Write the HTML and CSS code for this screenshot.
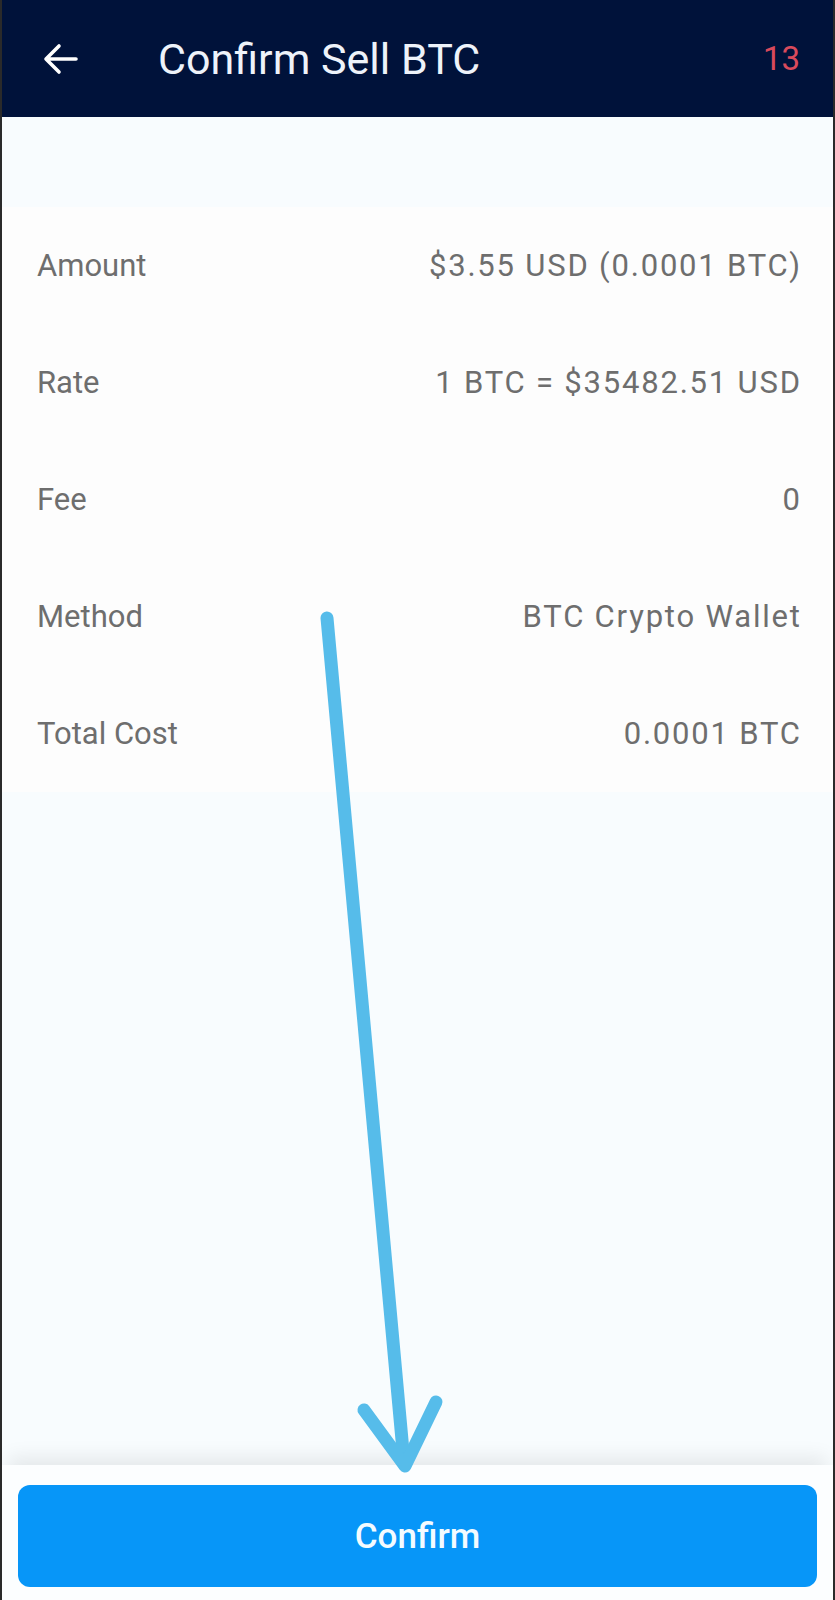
FILE: index.html
```html
<!DOCTYPE html>
<html lang="en">
<head>
  <meta charset="UTF-8">
  <meta name="viewport" content="width=device-width, initial-scale=1.0">
  <title>Confirm Sell BTC</title>
  <link rel="stylesheet" href="styles.css">
</head>
<body>
  <div class="screen">
    <header class="topbar">
      <a class="back" href="#">
        <svg width="36" height="32" viewBox="0 0 36 32">
          <path d="M33 16H4M16 3L3 16l13 13" fill="none" stroke="#fff" stroke-width="3.6" stroke-linecap="round" stroke-linejoin="round"/>
        </svg>
      </a>
      <h1 class="title">Confirm Sell BTC</h1>
      <span class="timer">13</span>
    </header>

    <main class="content">
      <div class="card">
        <div class="row"><span class="label">Amount</span><span class="value">$3.55 USD (0.0001 BTC)</span></div>
        <div class="row"><span class="label">Rate</span><span class="value">1 BTC = $35482.51 USD</span></div>
        <div class="row"><span class="label">Fee</span><span class="value">0</span></div>
        <div class="row"><span class="label">Method</span><span class="value">BTC Crypto Wallet</span></div>
        <div class="row"><span class="label">Total Cost</span><span class="value">0.0001 BTC</span></div>
      </div>
    </main>

    <footer class="bottom">
      <button class="confirm">Confirm</button>
    </footer>

    <!-- annotation drawn over the screenshot -->
    <svg class="annot" width="835" height="1600" viewBox="0 0 835 1600">
      <g fill="none" stroke="#56bcea" stroke-width="13" stroke-linecap="round" stroke-linejoin="round">
        <path d="M327 618L404 1462"/>
        <path d="M364 1410L405 1466L436 1402"/>
      </g>
    </svg>
  </div>
</body>
</html>
```

FILE: styles.css
```css
* {
  margin: 0;
  padding: 0;
  box-sizing: border-box;
}
body {
  width: 835px;
  height: 1600px;
  font-family: Roboto, "Liberation Sans", sans-serif;
  background-color: #f8fcfe;
}
.screen {
  position: relative;
  width: 835px;
  height: 1600px;
  display: flex;
  flex-direction: column;
  border-left: 2px solid #2a2a2a;
  border-right: 2px solid #2a2a2a;
  overflow: hidden;
}
.topbar {
  height: 117px;
  background-color: #00123a;
  display: flex;
  align-items: center;
  padding: 0 33px 0 41px;
}
.back {
  display: flex;
  width: 36px;
  height: 32px;
}
.title {
  flex: 1;
  margin-left: 79px;
  font-size: 43px;
  font-weight: 400;
  color: #eef3fa;
}
.timer {
  font-size: 33px;
  color: #d94a5c;
}
.content {
  flex: 1;
  padding-top: 90px;
}
.card {
  background-color: #fdfdfd;
  padding: 0 33px 0 35px;
  display: flex;
  flex-direction: column;
}
.row {
  height: 117px;
  display: flex;
  align-items: center;
  justify-content: space-between;
  color: #6e6e6e;
  font-size: 31px;
}
.row .value {
  letter-spacing: 1.8px;
  margin-right: -1.8px;
}
.bottom {
  position: relative;
  height: 135px;
  background-color: #fcfeff;
  padding: 20px 16px 13px 16px;
  box-shadow: 0 -14px 18px -6px rgba(0, 0, 0, 0.08);
}
.confirm {
  width: 100%;
  height: 102px;
  border: none;
  border-radius: 12px;
  background-color: #0796f8;
  color: #f4fbff;
  font-family: Roboto, "Liberation Sans", sans-serif;
  font-size: 35px;
  font-weight: 500;
}
.annot {
  position: absolute;
  top: 0;
  left: -2px;
  pointer-events: none;
}
```
